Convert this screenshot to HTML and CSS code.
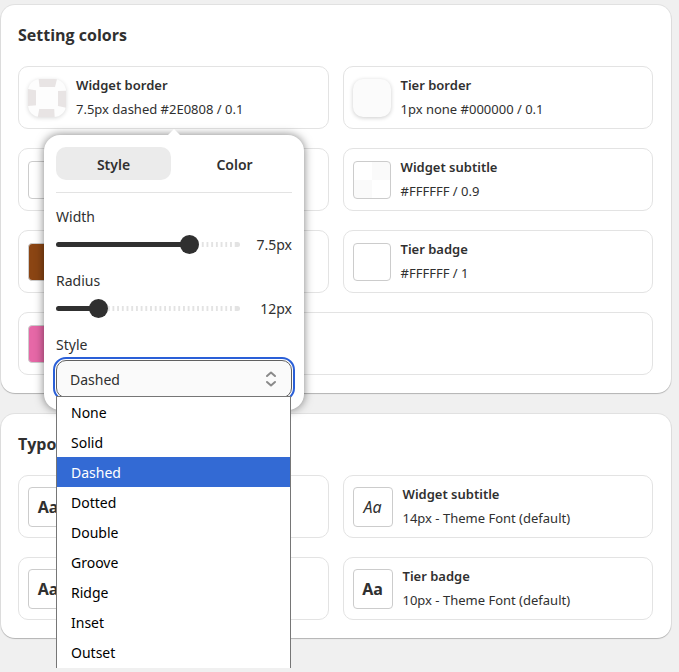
FILE: index.html
```html
<!DOCTYPE html>
<html lang="en">
<head>
    <meta charset="UTF-8">
    <meta name="viewport" content="width=device-width, initial-scale=1.0">
    <title>Widget settings</title>
    <link rel="stylesheet" href="styles.css">
</head>
<body>
    <section class="card">
        <h2>Setting colors</h2>
        <div class="tiles">
            <div class="tile-wrap">
                <button type="button" class="tile">
                    <span class="swatch swatch-dashed"></span>
                    <span class="tile-text">
                        <span class="tile-name">Widget border</span>
                        <span>7.5px dashed #2E0808 / 0.1</span>
                    </span>
                </button>

                <!-- Border settings popover -->
                <div class="popover">
                    <div class="tabs">
                        <button type="button" class="tab active">Style</button>
                        <button type="button" class="tab">Color</button>
                    </div>
                    <div class="field">
                        <label for="borderWidth">Width</label>
                        <div class="range-row">
                            <input type="range" id="borderWidth" min="0" max="10" step="0.5" value="7.5" style="--fill: 75%">
                            <output for="borderWidth">7.5px</output>
                        </div>
                    </div>
                    <div class="field">
                        <label for="borderRadius">Radius</label>
                        <div class="range-row">
                            <input type="range" id="borderRadius" min="0" max="60" value="12" style="--fill: 20%">
                            <output for="borderRadius">12px</output>
                        </div>
                    </div>
                    <div class="select-field">
                        <label for="borderStyle">Style</label>
                        <div class="select-wrap">
                            <select id="borderStyle">
                                <option>None</option>
                                <option>Solid</option>
                                <option selected>Dashed</option>
                                <option>Dotted</option>
                                <option>Double</option>
                                <option>Groove</option>
                                <option>Ridge</option>
                                <option>Inset</option>
                                <option>Outset</option>
                            </select>
                            <svg class="select-icon" width="12" height="16" viewBox="0 0 12 16" fill="none" stroke="#8a8a8a" stroke-width="2" stroke-linecap="round" stroke-linejoin="round">
                                <path d="M2 5 6 1.5 10 5M2 11 6 14.5 10 11"/>
                            </svg>
                            <ul class="options" role="listbox" aria-label="Style">
                                <li role="option">None</li>
                                <li role="option">Solid</li>
                                <li role="option" class="selected" aria-selected="true">Dashed</li>
                                <li role="option">Dotted</li>
                                <li role="option">Double</li>
                                <li role="option">Groove</li>
                                <li role="option">Ridge</li>
                                <li role="option">Inset</li>
                                <li role="option">Outset</li>
                            </ul>
                        </div>
                    </div>
                </div>
            </div>
            <button type="button" class="tile">
                <span class="swatch swatch-none"></span>
                <span class="tile-text">
                    <span class="tile-name">Tier border</span>
                    <span>1px none #000000 / 0.1</span>
                </span>
            </button>
            <button type="button" class="tile" aria-label="Widget title">
                <span class="swatch"></span>
            </button>
            <button type="button" class="tile">
                <span class="swatch swatch-checker"></span>
                <span class="tile-text">
                    <span class="tile-name">Widget subtitle</span>
                    <span>#FFFFFF / 0.9</span>
                </span>
            </button>
            <button type="button" class="tile" aria-label="Tier title">
                <span class="swatch swatch-brown"></span>
            </button>
            <button type="button" class="tile">
                <span class="swatch"></span>
                <span class="tile-text">
                    <span class="tile-name">Tier badge</span>
                    <span>#FFFFFF / 1</span>
                </span>
            </button>
            <button type="button" class="tile tile-wide" aria-label="Background">
                <span class="swatch swatch-pink"></span>
            </button>
        </div>
    </section>

    <section class="card">
        <h2>Typography</h2>
        <div class="tiles">
            <button type="button" class="tile">
                <span class="swatch swatch-font">Aa</span>
            </button>
            <button type="button" class="tile">
                <span class="swatch swatch-font italic">Aa</span>
                <span class="tile-text">
                    <span class="tile-name">Widget subtitle</span>
                    <span>14px - Theme Font (default)</span>
                </span>
            </button>
            <button type="button" class="tile">
                <span class="swatch swatch-font">Aa</span>
            </button>
            <button type="button" class="tile">
                <span class="swatch swatch-font">Aa</span>
                <span class="tile-text">
                    <span class="tile-name">Tier badge</span>
                    <span>10px - Theme Font (default)</span>
                </span>
            </button>
        </div>
    </section>
</body>
</html>
```
FILE: styles.css
```css
* {
    box-sizing: border-box;
}

body {
    margin: 0;
    min-height: 100vh;
    padding: 5px 8px 0 1px;
    background-color: #f0f0f0;
    font-family: "Noto Sans", "Open Sans", sans-serif;
    font-size: 13px;
    color: #303030;
}

button,
select,
input {
    font: inherit;
    color: inherit;
    margin: 0;
}

.card {
    background-color: #fff;
    border-radius: 14px;
    padding: 18px 18px 18px 17px;
    margin-bottom: 21px;
    box-shadow: 0 1px 1px rgba(0, 0, 0, 0.2), 0 0 0 1px rgba(0, 0, 0, 0.06);
}

.card:last-child {
    margin-bottom: 0;
}

h2 {
    margin: 0 0 19px;
    font-family: "Open Sans", sans-serif;
    font-size: 16px;
    line-height: 24px;
    font-weight: 700;
}

.tiles {
    display: grid;
    grid-template-columns: 1fr 1fr;
    gap: 19px 14px;
}

.tile-wrap {
    position: relative;
}

.tile {
    display: flex;
    align-items: center;
    gap: 10px;
    width: 100%;
    height: 63px;
    padding: 0 9px;
    background: #fff;
    border: 1px solid #e3e3e3;
    border-radius: 10px;
    text-align: left;
    cursor: pointer;
}

.tile-wide {
    grid-column: span 2;
}

.tile-text {
    display: flex;
    flex-direction: column;
    padding-bottom: 2px;
    line-height: 24px;
}

.tile-name {
    font-weight: 600;
}

/* Color previews */
.swatch {
    flex: none;
    width: 38px;
    height: 38px;
    border: 1px solid #ccc;
    border-radius: 4px;
}

.swatch-dashed {
    border: 8px dashed #e8e4e4;
    border-radius: 12px;
    background: #fdfdfd;
    box-shadow: 0 1px 4px rgba(0, 0, 0, 0.15);
}

.swatch-none {
    border: none;
    border-radius: 10px;
    background: #fbfbfb;
    box-shadow: 0 1px 4px rgba(0, 0, 0, 0.2);
}

.swatch-checker {
    background: conic-gradient(#fafafa 25%, #fff 0 50%, #fafafa 0 75%, #fff 0);
}

.swatch-brown {
    background: #8b4513;
}

.swatch-pink {
    background: #e668a7;
}

.swatch-font {
    display: flex;
    align-items: center;
    justify-content: center;
    width: 40px;
    height: 40px;
    font-size: 16px;
    font-weight: 700;
}

.swatch-font.italic {
    font-style: italic;
    font-weight: 400;
}

/* Popover */
.popover {
    position: absolute;
    z-index: 10;
    top: 69px;
    left: 26px;
    width: 260px;
    padding: 12px;
    background: #fff;
    border-radius: 16px;
    font-size: 14px;
    box-shadow: 0 0 10px rgba(0, 0, 0, 0.5);
}

.popover::before {
    content: "";
    position: absolute;
    top: -6px;
    left: 50%;
    margin-left: -6px;
    border: 6px solid transparent;
    border-top: none;
    border-bottom-color: #fff;
}

.tabs {
    display: grid;
    grid-template-columns: 1fr 1fr;
    gap: 6px;
    padding-bottom: 12px;
    margin-bottom: 12px;
    border-bottom: 1px solid #e3e3e3;
}

.tab {
    height: 33px;
    padding: 2px 6px 0;
    border: none;
    border-radius: 10px;
    background: none;
    font-weight: 600;
    cursor: pointer;
}

.tab.active {
    background: #ebebeb;
}

.field {
    height: 64px;
}

.field label,
.select-field label {
    display: block;
    line-height: 24px;
}

.range-row {
    display: flex;
    align-items: center;
    gap: 12px;
    height: 30px;
}

.range-row input {
    -webkit-appearance: none;
    appearance: none;
    flex: 1;
    min-width: 0;
    height: 19px;
    background: none;
}

.range-row input::-webkit-slider-runnable-track {
    height: 5px;
    border-radius: 3px;
    background:
        linear-gradient(#303030, #303030) no-repeat 0 0 / var(--fill) 100%,
        linear-gradient(#e3e3e3, #e3e3e3) no-repeat 100% 0 / 5px 100%,
        linear-gradient(90deg, #e3e3e3 50%, transparent 50%) 0 0 / calc(100% / 39) 100%;
}

.range-row input::-webkit-slider-thumb {
    -webkit-appearance: none;
    width: 19px;
    height: 19px;
    margin-top: -7px;
    border-radius: 50%;
    background: #303030;
}

.range-row output {
    width: 40px;
    text-align: right;
}

.select-wrap {
    position: relative;
    margin-top: 3px;
}

.select-wrap select {
    -webkit-appearance: none;
    appearance: none;
    display: block;
    width: 100%;
    height: 38px;
    padding: 0 32px 0 13px;
    background: #fafafa;
    border: 1px solid #616161;
    border-radius: 10px;
    outline: 2px solid #2a5fd7;
    outline-offset: 1px;
}

.select-icon {
    position: absolute;
    top: 11px;
    right: 15px;
    pointer-events: none;
}

.options {
    position: absolute;
    top: 36px;
    left: 0;
    right: 1px;
    margin: 0;
    padding: 0 0 1px;
    list-style: none;
    background: #fff;
    border: 1px solid #767676;
    border-bottom: none;
    color: #000;
}

.options li {
    height: 30px;
    padding-left: 14px;
    line-height: 32px;
}

.options .selected {
    background: #336ad4;
    color: #fff;
}
```
